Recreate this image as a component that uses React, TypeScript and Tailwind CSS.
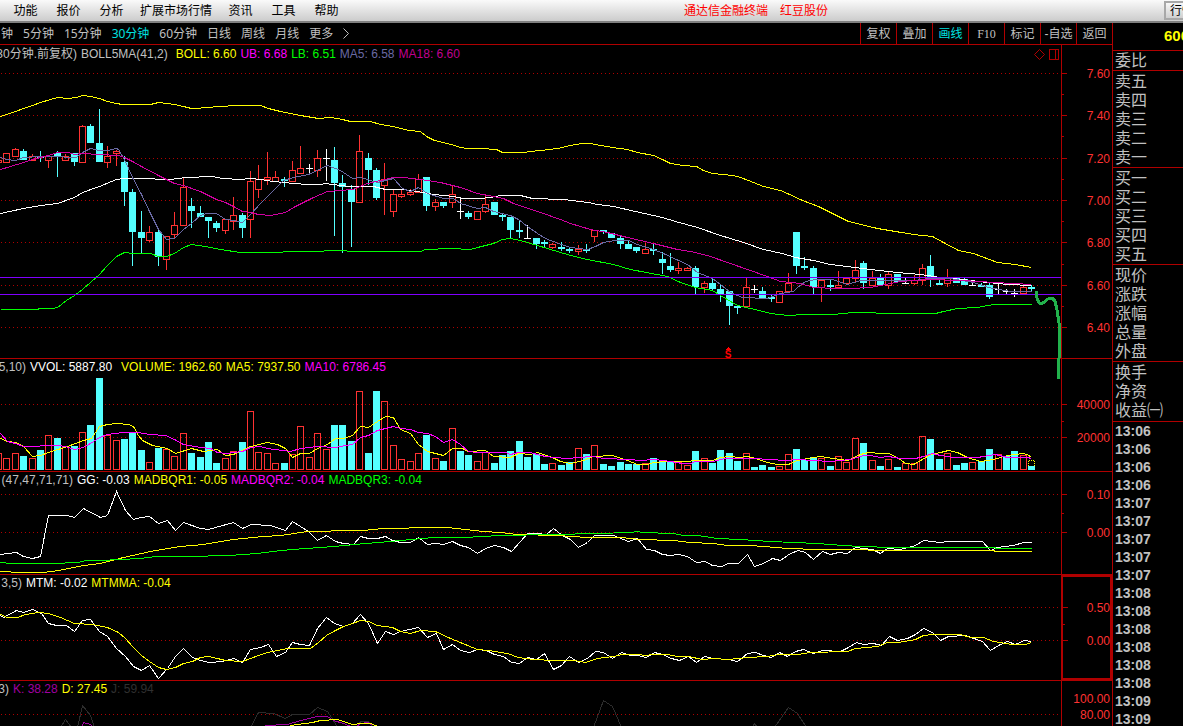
import type { ReactNode } from 'react';
import { clsx } from 'clsx';

// r = rising (hollow), c = falling (solid), w / x = flat cross on rising / falling volume
type Kind = 'r' | 'c' | 'w' | 'x';
// kind, high, open/close top, open/close bottom, low, volume top
type Bar = [Kind, number, number, number, number, number];

interface Reading {
  text: string;
  className: string;
}

interface Tick {
  y: number;
  label?: string;
  minor?: boolean;
}

const RED = '#b00000';
const UP = '#ff3232';
const DOWN = '#54ffff';
const VOLUME_BASE = 470;

const MENUS = ['功能', '报价', '分析', '扩展市场行情', '资讯', '工具', '帮助'];
const PERIODS = ['钟', '5分钟', '15分钟', '30分钟', '60分钟', '日线', '周线', '月线', '更多'];
const TOOLS = ['复权', '叠加', '画线', 'F10', '标记', '-自选', '返回'];

const QUOTE_GROUPS = [
  ['委比'],
  ['卖五', '卖四', '卖三', '卖二', '卖一'],
  ['买一', '买二', '买三', '买四', '买五'],
  ['现价', '涨跌', '涨幅', '总量', '外盘'],
  ['换手', '净资', '收益㈠'],
];

const TIMES = [
  '13:06', '13:06', '13:06', '13:06',
  '13:07', '13:07', '13:07', '13:07', '13:07',
  '13:08', '13:08', '13:08', '13:08', '13:08', '13:08',
  '13:09', '13:09',
];

const BARS: Bar[] = [
  ['r', 160, 160, 163, 163, 453],
  ['r', 153, 153, 163, 163, 458], ['r', 148, 149, 157, 157, 453], ['c', 149, 151, 160, 160, 456],
  ['r', 154, 156, 161, 161, 458], ['c', 151, 156, 158, 162, 450], ['r', 155, 156, 161, 168, 435],
  ['c', 151, 153, 156, 177, 438], ['r', 154, 156, 161, 161, 446], ['c', 153, 153, 162, 166, 446],
  ['r', 125, 126, 163, 163, 432], ['c', 124, 126, 143, 143, 425], ['c', 109, 143, 162, 162, 378],
  ['r', 146, 156, 163, 168, 435], ['r', 150, 151, 154, 166, 440], ['c', 156, 162, 192, 206, 439],
  ['c', 189, 192, 232, 266, 432], ['c', 211, 232, 238, 253, 450], ['r', 226, 232, 241, 242, 462],
  ['c', 228, 232, 257, 266, 448], ['r', 236, 236, 260, 270, 449], ['r', 212, 225, 235, 238, 456],
  ['r', 178, 187, 226, 226, 433], ['c', 198, 206, 211, 228, 453], ['c', 206, 213, 217, 217, 457],
  ['c', 217, 217, 221, 238, 442], ['c', 221, 223, 228, 232, 463], ['r', 219, 219, 231, 234, 458],
  ['r', 197, 215, 222, 230, 451], ['c', 213, 215, 228, 238, 442], ['r', 171, 181, 220, 238, 411],
  ['r', 165, 179, 190, 198, 452], ['r', 152, 177, 180, 185, 453], ['r', 171, 177, 182, 182, 463],
  ['c', 177, 179, 181, 187, 463], ['r', 161, 170, 182, 182, 454], ['r', 146, 168, 174, 174, 426],
  ['w', 164, 168, 169, 173, 457], ['r', 150, 158, 171, 177, 433], ['w', 149, 158, 159, 181, 449],
  ['c', 147, 160, 183, 236, 425], ['c', 175, 183, 187, 253, 425], ['c', 185, 189, 202, 247, 441],
  ['r', 135, 151, 203, 203, 391], ['c', 153, 158, 170, 185, 453], ['c', 168, 170, 198, 200, 391],
  ['r', 163, 179, 186, 215, 401], ['r', 190, 194, 212, 217, 445], ['r', 190, 194, 197, 198, 459],
  ['r', 189, 192, 195, 196, 461], ['r', 174, 179, 193, 193, 453], ['c', 177, 177, 206, 211, 435],
  ['r', 199, 202, 207, 211, 458], ['c', 202, 202, 206, 208, 461], ['r', 185, 194, 203, 208, 428],
  ['x', 198, 211, 212, 219, 451], ['c', 211, 213, 217, 219, 455], ['r', 211, 211, 220, 220, 461],
  ['r', 194, 204, 212, 213, 452], ['c', 202, 202, 215, 215, 463], ['c', 213, 215, 217, 221, 455],
  ['c', 217, 217, 230, 238, 451], ['c', 220, 230, 232, 238, 441], ['x', 225, 238, 239, 239, 457],
  ['c', 238, 238, 244, 249, 454], ['c', 240, 242, 244, 247, 464], ['r', 243, 244, 248, 249, 463],
  ['c', 242, 247, 249, 251, 465], ['c', 247, 249, 251, 253, 462], ['r', 245, 249, 252, 255, 448],
  ['c', 244, 249, 251, 253, 454], ['r', 230, 230, 237, 242, 445], ['c', 230, 230, 232, 234, 464],
  ['c', 233, 233, 238, 238, 466], ['c', 236, 238, 244, 249, 462], ['c', 240, 244, 249, 249, 464],
  ['c', 247, 247, 251, 253, 464], ['r', 243, 249, 254, 254, 463], ['c', 244, 249, 251, 255, 458],
  ['c', 252, 259, 263, 274, 461], ['c', 253, 266, 270, 272, 462], ['r', 262, 268, 271, 274, 462],
  ['r', 267, 268, 271, 271, 465], ['c', 266, 268, 287, 294, 451], ['r', 281, 283, 288, 293, 458],
  ['c', 279, 283, 289, 291, 463], ['c', 285, 289, 294, 302, 450], ['c', 291, 291, 306, 325, 453],
  ['c', 305, 306, 308, 314, 461], ['r', 278, 287, 307, 307, 453], ['x', 285, 289, 290, 293, 467],
  ['c', 287, 291, 299, 299, 465], ['c', 295, 297, 299, 302, 467], ['r', 291, 291, 303, 303, 466],
  ['r', 273, 283, 292, 292, 454], ['c', 232, 232, 266, 274, 449], ['c', 257, 266, 268, 270, 460],
  ['c', 266, 268, 287, 294, 457], ['r', 279, 280, 288, 302, 458], ['c', 280, 285, 287, 291, 466],
  ['r', 271, 285, 288, 288, 456], ['r', 278, 278, 284, 285, 462], ['r', 260, 270, 279, 283, 438],
  ['c', 261, 263, 283, 289, 443], ['r', 271, 278, 286, 286, 460], ['c', 274, 278, 285, 285, 466],
  ['r', 272, 274, 286, 289, 459], ['c', 274, 274, 282, 282, 467], ['w', 278, 283, 284, 284, 463],
  ['r', 275, 280, 284, 285, 463], ['r', 264, 268, 281, 285, 436], ['c', 255, 266, 279, 287, 439],
  ['c', 279, 283, 285, 285, 459], ['r', 269, 278, 284, 287, 453], ['c', 278, 278, 283, 283, 465],
  ['c', 278, 279, 285, 285, 463], ['w', 282, 285, 286, 286, 462], ['c', 283, 285, 287, 287, 461],
  ['c', 282, 285, 297, 299, 449], ['w', 284, 289, 290, 294, 454], ['x', 289, 291, 292, 294, 456],
  ['x', 289, 293, 294, 297, 451], ['r', 286, 287, 294, 294, 455], ['c', 285, 287, 289, 291, 466],
];

const UPPER_BAND =
  '0,116 6,114 15,111 23,108 32,105 40,102 57,97 68,98 76,97 82,95 90,96 99,98 107,101 116,103 122,104 150,104 158,102 174,104 183,106 191,108 210,107 216,106 240,105 260,105 268,108 280,111 300,115 318,118 330,117 342,119 350,121 370,121 380,124 393,126 408,130 420,131 426,136 434,140 451,144 460,147 467,148 480,148 496,149 502,152 523,152 530,151 540,150 557,148 570,145 582,143 590,143 600,145 612,147 627,149 637,152 653,155 662,159 670,163 682,165 696,166 703,170 712,173 733,175 740,177 753,182 763,186 780,190 787,193 802,200 818,206 830,212 848,221 877,228 913,234 932,236 943,242 958,250 973,253 997,262 1015,264 1031,267';
const MIDDLE_BAND =
  '0,213 23,208 40,205 57,203 74,197 82,192 99,186 116,179 124,178 150,178 158,179 170,179 185,177 212,176 222,178 240,179 250,178 260,179 273,181 293,183 307,184 320,184 325,183 340,185 348,186 373,186 385,189 403,189 423,192 433,194 453,196 463,198 480,198 490,197 500,195 520,195 532,198 563,199 588,202 597,204 613,206 635,211 662,217 675,221 697,227 720,235 743,242 763,249 782,253 795,257 813,260 830,264 847,266 870,269 897,272 920,274 940,277 962,279 987,282 1007,284 1031,285';
const LOWER_BAND =
  '0,309 36,309 40,308 52,308 57,307 66,300 74,295 82,289 99,274 107,265 116,256 124,252 132,253 150,253 158,256 166,256 174,253 183,247 191,244 205,246 220,249 240,252 262,252 303,251 345,250 348,251 420,251 425,249 450,248 470,249 477,247 493,243 502,239 510,238 520,240 537,245 570,255 587,259 613,264 630,269 667,276 680,282 695,287 712,290 720,295 737,305 750,308 763,311 770,313 788,315 803,314 833,314 853,312 873,312 878,313 935,313 943,311 957,308 977,307 993,304 1031,304';
const MA18_LINE =
  '0,169 10,166 23,162 32,159 48,155 57,152 68,152 74,154 82,153 99,154 118,155 124,157 132,161 141,166 158,175 166,179 174,183 183,185 200,191 216,199 225,202 233,206 242,211 250,212 258,214 270,215 285,212 293,207 313,197 327,191 340,190 352,189 367,183 380,180 393,177 403,177 420,179 440,182 460,187 477,193 493,196 503,198 513,203 540,212 560,219 570,223 590,229 607,232 627,237 653,243 677,249 690,251 707,255 730,263 747,269 767,276 780,281 800,283 813,287 835,288 850,288 870,287 880,285 900,281 927,279 960,280 980,281 993,282 1013,283 1031,284';
const MA5_LINE =
  '0,157 6,159 15,160 23,157 40,156 57,156 70,157 76,157 82,152 90,148 99,150 107,150 116,148 118,149 124,159 132,177 141,194 149,211 158,229 166,239 174,238 183,229 191,223 200,215 206,213 216,213 225,219 233,220 242,222 250,214 260,203 283,180 293,177 308,174 327,165 340,170 352,178 360,177 377,182 393,178 402,188 410,191 418,187 427,193 443,198 453,198 460,203 477,208 485,207 493,211 510,215 518,219 527,226 537,233 545,238 558,243 570,247 587,249 595,246 603,242 615,240 628,240 637,244 653,249 663,253 678,260 687,264 697,272 712,278 720,284 730,292 742,297 767,298 780,293 793,291 797,287 805,281 815,279 832,279 847,284 860,280 913,280 930,278 950,278 973,282 988,287 1010,291 1031,291';

const VOL_MA5 =
  '0,438 7,441 15,442 23,446 32,456 40,455 48,452 67,446 83,440 91,438 99,426 107,424 117,423 128,424 133,426 138,435 142,440 152,445 167,448 175,453 191,448 203,451 217,449 225,455 233,454 250,446 267,442 277,444 285,448 292,457 300,453 309,453 317,448 327,444 335,438 343,438 352,435 360,426 368,427 377,421 385,416 393,417 400,429 410,433 418,444 427,451 443,455 452,448 462,448 468,451 485,450 493,456 510,457 518,453 530,454 537,452 552,457 560,461 570,463 583,460 593,456 612,455 627,460 637,464 647,464 653,462 667,461 687,461 695,460 712,460 720,457 730,456 738,457 747,456 755,458 767,462 777,464 788,464 797,460 807,458 820,456 833,458 847,460 860,454 868,452 880,453 888,453 897,457 905,463 913,464 922,459 930,454 940,452 948,450 957,452 967,457 980,461 993,459 1007,455 1022,453 1027,454 1031,457';
const VOL_MA10 =
  '0,433 7,441 15,443 23,446 57,445 65,446 74,449 83,447 90,443 99,437 107,434 123,432 137,432 150,434 165,435 174,439 183,444 200,447 210,448 217,452 225,453 242,451 250,447 260,446 267,448 290,451 300,448 317,446 335,447 345,445 352,444 360,437 368,435 377,430 393,426 400,428 410,429 418,432 427,433 435,436 443,442 452,439 460,444 468,451 477,452 505,452 510,454 518,452 530,452 540,455 552,457 568,458 577,457 593,456 603,458 630,459 638,460 655,459 670,461 682,463 690,463 695,461 712,461 725,458 755,458 767,459 787,460 797,459 813,460 830,461 850,459 863,455 870,455 880,457 888,456 900,458 915,458 923,456 932,453 940,455 953,457 977,457 995,454 1007,457 1027,457 1031,458';

const GG_LINE =
  '0,554 16,552 23,556 32,558 40,556 48,515 67,515 74,517 83,508 100,517 107,515 116,491 125,510 133,519 140,517 149,516 158,523 167,520 175,530 183,522 200,528 208,529 233,522 242,528 251,524 270,525 285,530 292,521 308,531 317,540 326,535 335,541 343,543 353,544 360,536 368,538 377,538 385,536 392,540 400,542 410,542 418,537 427,544 435,543 443,544 452,541 460,545 468,547 477,553 485,548 494,545 503,547 511,551 520,541 527,533 537,533 546,534 553,528 562,535 570,539 578,547 587,542 594,535 613,535 628,541 637,538 646,549 654,550 662,554 670,555 678,554 687,556 696,562 705,561 712,565 721,566 728,563 738,563 747,554 754,566 763,563 772,558 780,560 790,553 798,550 805,552 813,559 822,551 830,554 838,552 847,553 855,547 872,549 880,553 887,548 900,549 915,545 923,540 940,542 947,541 982,541 990,550 997,547 1013,545 1023,542 1031,542';
const MADBQR1_LINE =
  '0,571 20,572 43,572 58,570 83,565 100,563 123,557 150,551 180,546 203,544 233,539 263,536 280,535 307,531 328,531 333,530 363,530 383,528 400,528 417,527 447,527 465,529 483,531 500,532 517,534 557,535 587,537 620,537 640,539 673,540 690,542 713,543 727,545 750,545 763,546 787,548 817,549 917,550 993,550 995,551 1031,551';
const MADBQR3_LINE =
  '0,562 10,563 52,563 78,562 85,560 100,560 120,559 140,558 155,556 187,556 228,555 257,553 280,550 305,548 320,547 345,545 365,543 390,541 400,540 433,537 463,537 500,535 553,534 597,533 630,532 637,531 642,532 673,533 683,535 697,535 717,538 740,539 770,541 817,543 843,545 860,546 893,547 993,547 997,548 1031,548';

const MTM_LINE =
  '0,615 3,617 16,610 23,612 32,609 41,613 48,623 56,625 66,625 74,631 82,620 90,619 99,631 107,636 116,648 125,656 133,666 141,670 149,665 158,678 167,668 175,656 183,648 192,657 200,660 209,662 222,661 233,658 242,662 250,649 260,647 268,644 276,656 285,652 292,642 300,644 309,645 317,628 326,617 334,623 343,626 352,623 360,614 368,623 377,643 385,631 393,634 400,631 418,627 427,637 436,633 443,649 452,644 460,650 469,652 477,649 486,650 494,654 503,656 511,662 519,663 527,657 536,659 544,653 553,669 561,665 569,656 578,662 587,658 595,651 603,652 612,658 621,652 630,655 637,655 646,657 654,652 662,654 671,658 679,660 688,656 696,662 704,656 713,658 728,659 737,661 747,653 755,652 763,655 771,657 779,652 787,656 795,651 803,649 813,653 822,650 840,651 848,647 856,642 863,644 873,643 881,645 889,636 897,640 907,638 915,634 923,628 932,632 940,640 948,636 965,635 982,641 990,650 998,645 1007,641 1015,644 1024,640 1031,641';
const MTMMA_LINE =
  '0,614 7,617 17,617 25,614 38,612 48,613 60,617 74,623 92,624 107,627 118,632 125,638 133,647 141,655 149,661 158,667 166,669 175,667 183,663 192,661 200,657 208,656 217,658 225,660 242,661 250,658 258,655 267,652 287,648 310,648 318,642 326,635 335,630 343,626 352,623 360,620 368,621 377,625 392,627 400,631 410,633 420,630 435,631 450,638 477,649 488,650 507,653 518,657 533,659 553,660 573,660 585,662 597,658 613,656 622,654 637,654 645,655 652,654 667,654 677,656 688,656 702,659 713,658 728,659 747,657 767,656 778,654 797,654 810,652 847,651 855,648 877,646 887,642 898,642 915,639 923,635 932,634 960,634 970,637 983,637 993,641 1012,644 1025,644 1031,642';

const J_LINES = [
  '60,727 65,719 71,727',
  '77,727 82,705 90,715 94,727',
  '250,727 258,712 273,713 285,718 292,714 309,714 317,707 327,711 333,720 337,727',
  '357,727 360,721 368,721 373,727',
  '593,727 603,700 612,706 621,727',
  '752,727 754,723 757,727',
  '774,727 788,707 797,713 806,727',
];
const K_LINES = [
  '81,727 83,722 90,724 92,727',
  '265,725 287,724 300,720 317,716 327,716 333,720 343,723 353,727',
  '356,726 360,723 368,722 372,725',
];
const D_LINE = '290,725 312,722 320,720 337,719 352,724 362,723 370,723 380,727';

const barX = (i: number) => Math.round(6.45 + 8.4 * (i - 1));

function Line({ points, color }: { points: string; color: string }) {
  return <polyline points={points} fill="none" stroke={color} transform="translate(0.5 0.5)" />;
}

function GridLine({ y }: { y: number }) {
  return (
    <line x1="0" x2="100%" y1={y + 0.5} y2={y + 0.5} stroke={RED} strokeDasharray="1 3" strokeDashoffset="-1" />
  );
}

function Candle({ bar, x }: { bar: Bar; x: number }) {
  const [kind, high, top, bottom, low] = bar;

  if (kind === 'r') {
    return (
      <g>
        <rect x={x} y={high} width="1" height={top - high} fill={UP} />
        <rect x={x} y={bottom} width="1" height={low - bottom} fill={UP} />
        <rect x={x - 2.5} y={top + 0.5} width="6" height={bottom - top - 1} fill="none" stroke={UP} />
      </g>
    );
  }

  const fill = kind === 'c' ? DOWN : '#ffffff';
  return (
    <g fill={fill}>
      <rect x={x} y={high} width="1" height={low - high} />
      <rect x={x - 3} y={top} width="7" height={bottom - top} />
    </g>
  );
}

function VolumeBar({ bar, x }: { bar: Bar; x: number }) {
  const top = bar[5];
  if (bar[0] === 'r' || bar[0] === 'w') {
    return <rect x={x - 2.5} y={top + 0.5} width="6" height={VOLUME_BASE - top - 1} fill="none" stroke={UP} />;
  }
  return <rect x={x - 3} y={top} width="7" height={VOLUME_BASE - top} fill={DOWN} />;
}

interface PaneProps {
  top: number;
  label: string;
  labelClass: string;
  readings: Reading[];
  ticks: Tick[];
  plotClass: string;
  headerClass?: string;
  axisClass?: string;
  paneClass?: string;
  actions?: ReactNode;
  children: ReactNode;
}

function Pane({
  top, label, labelClass, readings, ticks, plotClass, headerClass = 'h-4', axisClass, paneClass, actions, children,
}: PaneProps) {
  const plotTop = top + (headerClass === 'h-4' ? 16 : 18);

  return (
    <section className={clsx('flex border-[#b00000]', paneClass ?? 'shrink-0 border-b')}>
      <div className="flex min-w-0 flex-1 flex-col">
        <div className={clsx('flex shrink-0 items-center gap-1 whitespace-nowrap', headerClass)}>
          <span className={clsx('flex shrink-0 justify-end overflow-hidden text-[#c0c0c0]', labelClass)}>
            <span>{label}</span>
          </span>
          {readings.map((r) => (
            <span key={r.text} className={r.className}>{r.text}</span>
          ))}
          {actions}
        </div>
        <svg className={clsx('block w-full', plotClass)} shapeRendering="crispEdges" aria-hidden="true">
          <g transform={`translate(0 ${-plotTop})`}>
            {ticks.filter((t) => !t.minor && t.label !== '100.00').map((t) => <GridLine key={t.y} y={t.y} />)}
            {children}
          </g>
        </svg>
      </div>
      <div className={clsx('flex w-[51px] shrink-0 flex-col border-[#b00000]', axisClass ?? 'border-l')}>
        <svg className="block h-0 w-full grow overflow-visible" shapeRendering="crispEdges">
          <g transform={`translate(0 ${-top - (axisClass ? 2 : 0)})`}>
            {ticks.map((t) => (
              <g key={t.y}>
                {top < 681 && <rect x="0" y={t.y} width={t.minor ? 2 : 5} height="1" fill={RED} />}
                {t.label && (
                  <text x={axisClass ? 47 : 48} y={t.y + 5} textAnchor="end" fill={UP} fontSize="12">{t.label}</text>
                )}
              </g>
            ))}
          </g>
        </svg>
      </div>
    </section>
  );
}

function MenuBar() {
  return (
    <header className="flex h-[23px] shrink-0 border-b-2 border-[#808080] bg-linear-to-b from-[#fafafa] to-[#cccccc] pl-1 text-black">
      <nav className="flex">
        {MENUS.map((m) => (
          <button key={m} type="button" className={clsx('whitespace-nowrap text-center', m.length > 2 ? 'w-[86px]' : 'w-[43px]')}>
            {m}
          </button>
        ))}
      </nav>
      <h1 className="flex flex-1 items-center justify-center gap-3 text-[#ff0000]">
        <span>通达信金融终端</span>
        <span>红豆股份</span>
      </h1>
      <div className="w-[19px] overflow-hidden pt-px">
        <button type="button" className="h-[19px] w-12 border-2 border-[#a8a8a8] bg-linear-to-b from-[#f8f8f8] to-[#cfcfcf] pl-1 text-left">
          行情
        </button>
      </div>
    </header>
  );
}

function Toolbar() {
  return (
    <div className="flex h-[22px] shrink-0 border-b border-[#b00000] text-[#c0c0c0]">
      <nav className="flex min-w-0 flex-1 items-center gap-[10px] overflow-hidden whitespace-nowrap pl-px font-['Noto_Sans','Noto_Sans_CJK_SC',sans-serif]">
        {PERIODS.map((p) => (
          <button key={p} type="button" className={p === '30分钟' ? 'text-[#00e0e0]' : undefined}>{p}</button>
        ))}
        <svg width="6" height="11" viewBox="0 0 6 11" fill="none" stroke="#c0c0c0" aria-hidden="true">
          <path d="M0.5 0.5l5 5-5 5" />
        </svg>
      </nav>
      <div className="flex">
        {TOOLS.map((t) => (
          <button
            key={t}
            type="button"
            className={clsx(
              'w-9 whitespace-nowrap border-l border-[#b00000] text-center',
              t === '画线' && 'text-[#00e0e0]',
              t === 'F10' && "font-['Liberation_Serif',serif]",
            )}
          >
            {t}
          </button>
        ))}
      </div>
    </div>
  );
}

function PriceActions() {
  return (
    <span className="ml-auto flex gap-1 pr-[2px]">
      <button type="button" aria-label="标记点">
        <svg width="11" height="11" viewBox="0 0 11 11" fill="none" stroke={RED}>
          <path d="M5.5 0.5l5 5-5 5-5-5z" />
        </svg>
      </button>
      <button type="button" aria-label="分栏">
        <svg width="10" height="11" viewBox="0 0 10 11" fill="none" stroke={RED} shapeRendering="crispEdges">
          <path d="M0.5 0.5h9v10h-9zM6.5 0.5v10" />
        </svg>
      </button>
    </span>
  );
}

function Sidebar() {
  return (
    <aside className="flex w-[71px] shrink-0 flex-col overflow-hidden border-l border-[#b00000] text-base text-[#c0c0c0]">
      <div className="flex h-[27px] shrink-0 items-center pl-[51px] text-[15px] font-bold text-[#ffff00]">600</div>
      {QUOTE_GROUPS.map((group) => (
        <ul
          key={group[0]}
          className={clsx(
            'shrink-0 border-t border-[#b00000] pl-[2px]',
            group.length > 1 && 'pt-px',
            group.length === 3 && 'pb-px',
          )}
        >
          {group.map((name) => (
            <li key={name} className="h-[19px] whitespace-nowrap leading-[19px]">{name}</li>
          ))}
        </ul>
      ))}
      <ul className="min-h-0 flex-1 overflow-hidden border-t border-[#b00000] pl-[2px] text-sm font-bold">
        {TIMES.map((time, i) => (
          <li key={i} className="h-[18px] leading-[18px]">{time}</li>
        ))}
      </ul>
    </aside>
  );
}

export default function App() {
  return (
    <div className="flex h-screen flex-col overflow-hidden bg-black font-['Liberation_Sans','Noto_Sans_CJK_SC',sans-serif] text-xs">
      <MenuBar />
      <div className="flex min-h-0 flex-1">
        <main className="flex min-w-0 flex-1 flex-col">
          <Toolbar />

          <Pane
            top={45}
            label="30分钟.前复权)"
            labelClass="w-[77px]"
            headerClass="h-[18px]"
            plotClass="h-[295px] overflow-visible"
            actions={<PriceActions />}
            readings={[
              { text: 'BOLL5MA(41,2)', className: 'mr-1 text-[#c0c0c0]' },
              { text: 'BOLL: 6.60', className: 'text-[#ffff00]' },
              { text: 'UB: 6.68', className: 'text-[#ff00ff]' },
              { text: 'LB: 6.51', className: 'text-[#00ff00]' },
              { text: 'MA5: 6.58', className: 'text-[#6a6aa4]' },
              { text: 'MA18: 6.60', className: 'text-[#c00090]' },
            ]}
            ticks={[
              { y: 73, label: '7.60' }, { y: 94, minor: true }, { y: 115, label: '7.40' }, { y: 136, minor: true },
              { y: 158, label: '7.20' }, { y: 179, minor: true }, { y: 200, label: '7.00' }, { y: 221, minor: true },
              { y: 242, label: '6.80' }, { y: 264, minor: true }, { y: 285, label: '6.60' }, { y: 306, minor: true },
              { y: 327, label: '6.40' },
            ]}
          >
            {BARS.map((bar, i) => <Candle key={i} bar={bar} x={barX(i)} />)}
            <Line points={MIDDLE_BAND} color="#ffffff" />
            <Line points={UPPER_BAND} color="#ffff00" />
            <Line points={LOWER_BAND} color="#00ff00" />
            <Line points={MA5_LINE} color="#6a6aa4" />
            <Line points={MA18_LINE} color="#d000a0" />
            <rect x="0" y="277" width="100%" height="1" fill="#8000ff" />
            <rect x="0" y="294" width="100%" height="1" fill="#8000ff" />
            <path d="M728 347l3 3h-6z" fill="#ff0000" />
            <text x="728" y="358" textAnchor="middle" fontSize="10" fontWeight="bold" fill="#ff0000">S</text>
            {/* hand-drawn forecast, runs down into the volume pane */}
            <path
              d="M1036.5 291l.5 7 2 5h4l5-4 4-1 3 3 2 9 2 13v35l-1 21"
              fill="none"
              stroke="#22b14c"
              strokeWidth="3"
              strokeLinejoin="round"
            />
          </Pane>

          <Pane
            top={359}
            label="5,10)"
            labelClass="w-[26px]"
            plotClass="h-24"
            readings={[
              { text: 'VVOL: 5887.80', className: 'mr-[5px] text-white' },
              { text: 'VOLUME: 1962.60', className: 'text-[#ffff00]' },
              { text: 'MA5: 7937.50', className: 'text-[#ffff00]' },
              { text: 'MA10: 6786.45', className: 'text-[#ff00ff]' },
            ]}
            ticks={[{ y: 404, label: '40000' }, { y: 421, minor: true }, { y: 437, label: '20000' }]}
          >
            {BARS.map((bar, i) => <VolumeBar key={i} bar={bar} x={barX(i)} />)}
            <path d="M1028.5 466v-5.5h6v5.5" fill="none" stroke="#ffff00" strokeDasharray="1 1" />
            <Line points={VOL_MA5} color="#ffff00" />
            <Line points={VOL_MA10} color="#ff00ff" />
          </Pane>

          <Pane
            top={472}
            label="(47,47,71,71)"
            labelClass="w-[73px]"
            plotClass="h-[86px]"
            readings={[
              { text: 'GG: -0.03', className: 'text-white' },
              { text: 'MADBQR1: -0.05', className: 'text-[#ffff00]' },
              { text: 'MADBQR2: -0.04', className: 'text-[#ff00ff]' },
              { text: 'MADBQR3: -0.04', className: 'text-[#00ff00]' },
            ]}
            ticks={[{ y: 494, label: '0.10' }, { y: 513, minor: true }, { y: 532, label: '0.00' }]}
          >
            <Line points={GG_LINE} color="#ffffff" />
            <Line points={MADBQR1_LINE} color="#ffff00" />
            <Line points={MADBQR3_LINE} color="#00ff00" />
          </Pane>

          <Pane
            top={575}
            label="3,5)"
            labelClass="w-[22px]"
            plotClass="h-[89px]"
            axisClass="border-2"
            readings={[
              { text: 'MTM: -0.02', className: 'text-white' },
              { text: 'MTMMA: -0.04', className: 'text-[#ffff00]' },
            ]}
            ticks={[{ y: 607, label: '0.50' }, { y: 624, minor: true }, { y: 640, label: '0.00' }]}
          >
            <Line points={MTM_LINE} color="#ffffff" />
            <Line points={MTMMA_LINE} color="#ffff00" />
          </Pane>

          <Pane
            top={681}
            label="3)"
            labelClass="w-[9px]"
            plotClass="h-0 grow"
            paneClass="min-h-0 flex-1"
            readings={[
              { text: 'K: 38.28', className: 'text-[#a000a0]' },
              { text: 'D: 27.45', className: 'text-[#ffff00]' },
              { text: 'J: 59.94', className: 'text-[#303030]' },
            ]}
            ticks={[{ y: 698, label: '100.00' }, { y: 714, label: '80.00' }]}
          >
            {J_LINES.map((points) => <Line key={points} points={points} color="#2c2c2c" />)}
            {K_LINES.map((points) => <Line key={points} points={points} color="#a000a0" />)}
            <Line points={D_LINE} color="#ffff00" />
          </Pane>
        </main>
        <Sidebar />
      </div>
    </div>
  );
}
